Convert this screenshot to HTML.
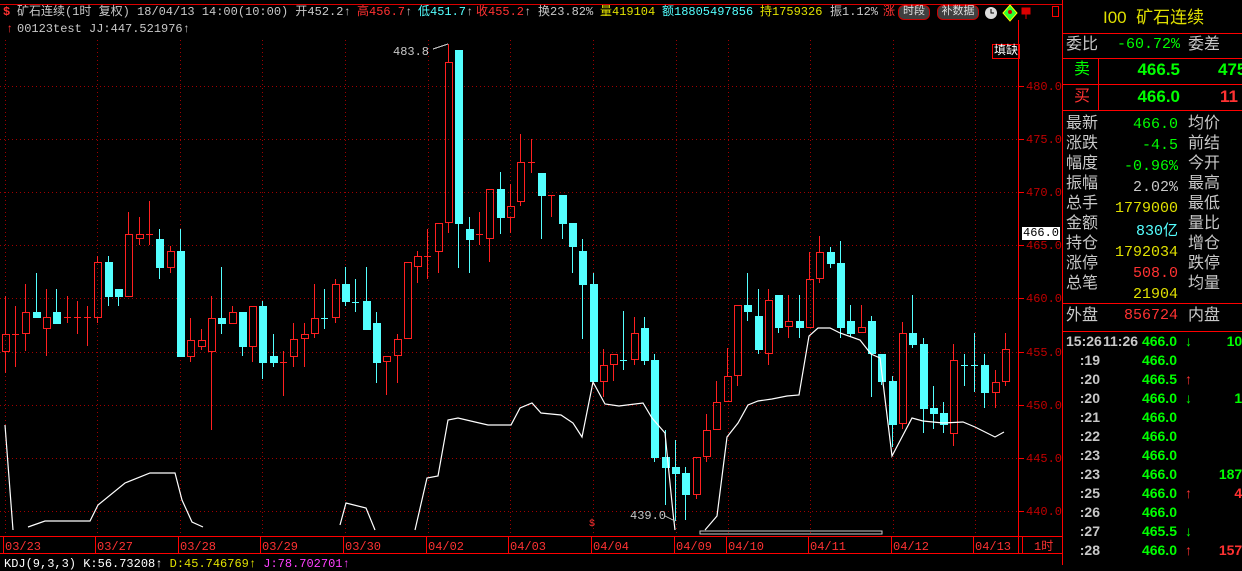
<!DOCTYPE html>
<html><head><meta charset="utf-8">
<style>
*{margin:0;padding:0}
body{width:1242px;height:565px;background:#000;overflow:hidden;position:relative;font-family:"Liberation Mono","Noto Sans CJK SC",monospace;font-size:12px;color:#c0c0c0}
.a{position:absolute;white-space:pre;line-height:14px}
.r{color:#ff3232}.c{color:#54ffff}.y{color:#e0e000}.w{color:#c8c8c8}.g{color:#00ff00}.m{color:#ff40ff}
.btn{position:absolute;top:5px;height:13px;border:1px solid #c00;border-radius:6px;background:#404040;color:#ddd;font-size:11px;line-height:13px;text-align:center}
.p{position:absolute;font-family:"Liberation Sans","Noto Sans CJK SC",sans-serif;font-size:16px;line-height:20px;white-space:pre}
.v{position:absolute;font-family:"Liberation Mono",monospace;font-size:15px;line-height:20px;text-align:right;white-space:pre}
.t{position:absolute;font-family:"Liberation Sans",sans-serif;font-weight:bold;font-size:14px;line-height:18px;white-space:pre}
</style></head><body>
<svg id="s" width="1242" height="565" style="position:absolute;left:0;top:0"></svg>

<div class="a r" style="left:3px;top:5px;font-weight:bold">$</div>
<div class="a w" style="left:17px;top:5px">矿石连续(1时 复权) 18/04/13 14:00(10:00) 开452.2↑</div>
<div class="a r" style="left:357px;top:5px">高456.7<span class="w">↑</span></div>
<div class="a c" style="left:418px;top:5px">低451.7<span class="w">↑</span></div>
<div class="a r" style="left:476px;top:5px">收455.2<span class="w">↑</span></div>
<div class="a w" style="left:538px;top:5px">换23.82%</div>
<div class="a y" style="left:600px;top:5px">量419104</div>
<div class="a c" style="left:662px;top:5px">额18805497856</div>
<div class="a y" style="left:760px;top:5px">持1759326</div>
<div class="a w" style="left:830px;top:5px">振1.12%</div>
<div class="a r" style="left:883px;top:5px">涨</div>
<div class="btn" style="left:898px;width:30px">时段</div>
<div class="btn" style="left:937px;width:40px">补数据</div>
<div class="a r" style="left:6px;top:22px;font-weight:bold">↑</div>
<div class="a w" style="left:17px;top:22px">00123test JJ:447.521976↑</div>
<div class="a" style="left:992px;top:44px;border:1px solid #f00;color:#fff;padding:0 1px;line-height:13px">填缺</div>
<div class="a w" style="left:393px;top:45px">483.8</div>
<div class="a w" style="left:630px;top:509px">439.0</div>
<div class="a r" style="left:589px;top:518px;font-size:10px">$</div>

<div class="a" style="left:1022px;top:227px;background:#fff;color:#000;line-height:13px;padding:0 1px">466.0</div>

<div class="a" style="left:4px;top:557px;color:#fff">KDJ(9,3,3) K:56.73208↑ <span class="y">D:45.746769↑</span> <span class="m">J:78.702701↑</span></div>

<!-- right panel -->
<div class="p y" style="left:1103px;top:8px;font-size:17px">I00  矿石连续</div>
<div class="p w" style="left:1066px;top:35px">委比</div>
<div class="v g" style="left:1110px;top:35px;width:70px">-60.72%</div>
<div class="p w" style="left:1188px;top:35px">委差</div>
<div class="p g" style="left:1074px;top:60px">卖</div>
<div class="t g" style="left:1120px;top:61px;width:60px;text-align:right;font-size:17px">466.5</div>
<div class="t g" style="left:1218px;top:61px;font-size:17px">475</div>
<div class="p r" style="left:1074px;top:87px">买</div>
<div class="t g" style="left:1120px;top:88px;width:60px;text-align:right;font-size:17px">466.0</div>
<div class="t r" style="left:1220px;top:88px;font-size:17px">11</div>

<div class="p w" style="left:1066px;top:114px">最新<br>涨跌<br>幅度<br>振幅<br>总手<br>金额<br>持仓<br>涨停<br>总笔</div>
<div class="p w" style="left:1188px;top:114px">均价<br>前结<br>今开<br>最高<br>最低<br>量比<br>增仓<br>跌停<br>均量</div>
<div class="v" style="left:1100px;top:114px;width:78px;line-height:21px"><span class="g">466.0</span><br><span class="g">-4.5</span><br><span class="g">-0.96%</span><br><span class="w">2.02%</span><br><span class="y">1779000</span><br><span class="c">830<span style="font-family:'Noto Sans CJK SC'">亿</span></span><br><span class="y">1792034</span><br><span class="r">508.0</span><br><span class="y">21904</span></div>
<div class="p w" style="left:1066px;top:306px">外盘</div>
<div class="v r" style="left:1100px;top:306px;width:78px">856724</div>
<div class="p w" style="left:1188px;top:306px">内盘</div>

<div class="t w" style="left:1066px;top:332px;line-height:19px">15:26</div>
<div class="t w" style="left:1103px;top:332px;line-height:19px">11:26</div>
<div class="t w" style="left:1060px;top:351px;width:40px;text-align:right;line-height:19px">:19<br>:20<br>:20<br>:21<br>:22<br>:23<br>:23<br>:25<br>:26<br>:27<br>:28</div>
<div class="t g" style="left:1130px;top:332px;width:47px;text-align:right;line-height:19px">466.0<br>466.0<br>466.5<br>466.0<br>466.0<br>466.0<br>466.0<br>466.0<br>466.0<br>466.0<br>465.5<br>466.0</div>
<div class="t" style="left:1185px;top:332px;line-height:19px;font-weight:normal"><span class="g">↓</span><br> <br><span class="r">↑</span><br><span class="g">↓</span><br> <br> <br> <br> <br><span class="r">↑</span><br> <br><span class="g">↓</span><br><span class="r">↑</span></div>
<div class="t" style="left:1150px;top:332px;width:100px;text-align:right;line-height:19px"><span class="g">100</span><br><span class="g">2</span><br><span class="r">2</span><br><span class="g">10</span><br><span class="g">6</span><br><span class="g">2</span><br><span class="g">2</span><br><span class="g">1878</span><br><span class="r">40</span><br><span class="r">6</span><br><span class="g">8</span><br><span class="r">1576</span></div>

<script>
var s=document.getElementById('s'),h='';
function L(x1,y1,x2,y2,c,e){h+='<line x1="'+x1+'" y1="'+y1+'" x2="'+x2+'" y2="'+y2+'" stroke="'+c+'" stroke-width="1" '+(e||'')+' shape-rendering="crispEdges"/>';}
var gy=[86,139,192,245,298,352,405,458,511];
gy.forEach(function(y){L(0,y+.5,1018,y+.5,'#a00000','stroke-dasharray="1,3"');L(1018,y+.5,1024,y+.5,'#f00');});
var dx=[5,97,180,262,345,428,510,593,676,728,810,893,975];
dx.forEach(function(x){L(x+.5,40,x+.5,536,'#a00000','stroke-dasharray="1,3"');});
L(0,4.5,1062,4.5,'#d00');
L(1018.5,20,1018.5,553,'#f00');
L(0,536.5,1062,536.5,'#f00');L(0,553.5,1062,553.5,'#f00');
L(1062.5,0,1062.5,565,'#f00');
[33,58,84,110,303,331].forEach(function(y){L(1062,y+.5,1242,y+.5,'#f00');});
L(1098.5,58,1098.5,110,'#f00');
L(1052.5,6,1052.5,17,'#f00');L(1058.5,6,1058.5,17,'#f00');L(1052,6.5,1058,6.5,'#f00');L(1052,16.5,1058,16.5,'#f00');
var dl=['03/23','03/27','03/28','03/29','03/30','04/02','04/03','04/04','04/09','04/10','04/11','04/12','04/13'];
dl.forEach(function(t,i){var x=dx[i]-2;L(x+.5,537,x+.5,553,'#f00');h+='<text x="'+(x+2)+'" y="550" fill="#ff3232" font-family="Liberation Mono" font-size="12">'+t+'</text>';});
L(1022.5,537,1022.5,553,'#f00');
h+='<text x="1034" y="550" fill="#ff3232" font-family="Liberation Mono,Noto Sans CJK SC" font-size="12">1时</text>';
[480,475,470,465,460,455,450,445,440].forEach(function(p,i){h+='<text x="1026" y="'+(gy[i]+4)+'" fill="#c00000" font-family="Liberation Mono" font-size="12">'+p+'.0</text>';});
var C=[[5,'r',296,373,334,351],[15,'r',306,367,334,334],[25,'r',284,351,312,333],[36,'c',273,317,312,317],[46,'r',289,356,317,328],[56,'c',289,323,312,323],[67,'r',296,323,317,317],[77,'r',301,334,317,317],[87,'r',306,346,317,317],[97,'r',256,323,262,317],[108,'c',256,306,262,296],[118,'c',289,306,289,296],[128,'r',212,296,234,296],[139,'r',217,245,234,238],[149,'r',201,245,234,234],[159,'c',229,279,239,267],[170,'r',246,273,251,267],[180,'c',229,356,251,356],[190,'r',318,362,340,356],[201,'r',329,350,340,346],[211,'r',296,430,318,351],[221,'c',267,334,318,323],[232,'r',306,323,312,323],[242,'c',312,356,312,346],[252,'r',306,362,306,346],[262,'c',301,379,306,362],[273,'c',334,367,356,362],[283,'r',351,396,362,362],[293,'r',323,367,339,356],[304,'r',323,367,334,338],[314,'r',284,338,318,333],[324,'c',289,329,318,318],[335,'r',279,323,284,317],[345,'c',267,306,284,301],[355,'c',279,312,302,302],[366,'c',267,329,301,329],[376,'c',312,383,323,362],[386,'r',356,395,356,361],[397,'r',334,383,339,355],[407,'r',262,338,262,338],[417,'r',251,283,256,266],[427,'r',229,279,256,256],[438,'r',223,273,223,251],[448,'r',44,233,62,222],[458,'c',50,268,50,223],[469,'c',217,273,229,239],[479,'r',212,245,234,234],[489,'r',189,262,189,238],[500,'c',172,234,189,217],[510,'r',184,233,206,217],[520,'r',134,206,162,201],[531,'r',139,173,162,162],[541,'c',173,239,173,195],[551,'r',195,217,195,195],[562,'c',195,239,195,223],[572,'c',223,273,223,246],[582,'c',239,339,251,284],[593,'c',273,381,284,381],[603,'r',349,397,365,381],[613,'r',354,381,354,364],[623,'c',311,370,360,360],[634,'r',317,365,333,359],[644,'c',317,365,328,360],[654,'c',354,462,360,457],[665,'c',430,505,457,467],[675,'c',440,521,467,473],[685,'c',467,520,473,494],[696,'r',457,499,457,494],[706,'r',414,462,430,456],[716,'r',381,429,402,429],[727,'r',348,401,376,401],[737,'r',305,386,305,375],[747,'c',273,321,305,311],[758,'c',289,354,316,349],[768,'r',289,365,300,353],[778,'c',295,333,295,327],[788,'r',295,338,321,326],[799,'c',295,338,321,327],[809,'r',252,327,279,327],[819,'r',236,283,252,278],[830,'c',247,268,252,263],[840,'c',241,338,263,327],[850,'c',305,337,321,333],[861,'r',305,332,327,332],[871,'c',316,397,321,353],[881,'c',354,385,354,381],[892,'c',376,447,381,424],[902,'r',322,429,333,423],[912,'c',295,348,333,344],[923,'c',338,433,344,408],[933,'c',386,429,408,413],[943,'c',402,433,413,424],[953,'r',344,446,360,433],[964,'c',354,386,365,365],[974,'c',333,392,365,365],[984,'c',354,408,365,392],[995,'r',370,408,382,392],[1005,'r',333,386,349,381]];
C.forEach(function(k){var x=k[0],col=k[1]=='r'?'#ff2020':'#54ffff',hi=k[2],lo=k[3],t=k[4],b=k[5];
 if(b-t<1){L(x+.5,hi,x+.5,lo,col);L(x-3,t+.5,x+4,t+.5,col);return;}
 if(k[1]=='r'){L(x+.5,hi,x+.5,t,col);L(x+.5,b,x+.5,lo,col);h+='<rect x="'+(x-3+.5)+'" y="'+(t+.5)+'" width="7" height="'+(b-t)+'" fill="none" stroke="'+col+'" shape-rendering="crispEdges"/>';}
 else{L(x+.5,hi,x+.5,lo,col);h+='<rect x="'+(x-3)+'" y="'+t+'" width="8" height="'+(b-t+1)+'" fill="'+col+'" shape-rendering="crispEdges"/>';}
});
var W=[[[5,425],[13,530]],[[28,527],[45,521],[90,521],[98,505],[125,483],[150,473],[175,473],[182,500],[192,522],[203,527]],[[340,525],[346,503],[366,508],[375,530]],[[415,530],[427,478],[438,476],[448,420],[458,418],[475,422],[488,425],[511,425],[520,408],[532,403],[541,413],[561,415],[573,423],[582,437],[593,382],[605,404],[619,406],[643,403],[652,418],[665,433],[673,513],[675,530]],[[705,530],[717,516],[727,437],[738,423],[748,405],[758,401],[772,399],[787,396],[799,395],[809,336],[818,328],[830,328],[840,333],[860,340],[871,354],[880,358],[892,456],[912,418],[923,421],[943,423],[963,422],[975,427],[995,437],[1004,432]]];
W.forEach(function(seg){h+='<polyline points="'+seg.map(function(p){return p.join(',')}).join(' ')+'" fill="none" stroke="#fff" stroke-width="1.2"/>';});
L(433,49,448,44,'#ccc');L(665,516,675,521,'#ccc');
h+='<rect x="700" y="531" width="182" height="3" fill="none" stroke="#ccc" stroke-width="1"/>';
h+='<circle cx="991" cy="13" r="6" fill="#ddd"/><path d="M991 9v4h3" stroke="#000" fill="none"/>';
h+='<path d="M1010 5l7 8-7 8-7-8z" fill="#30ff30" stroke="#ff0" stroke-width="1"/><circle cx="1010" cy="12" r="2" fill="#c00"/>';
h+='<path d="M1022 8h8v6h-8zM1026 14v5" fill="#d00" stroke="#d00"/>';
s.innerHTML=h;
</script>
</body></html>
